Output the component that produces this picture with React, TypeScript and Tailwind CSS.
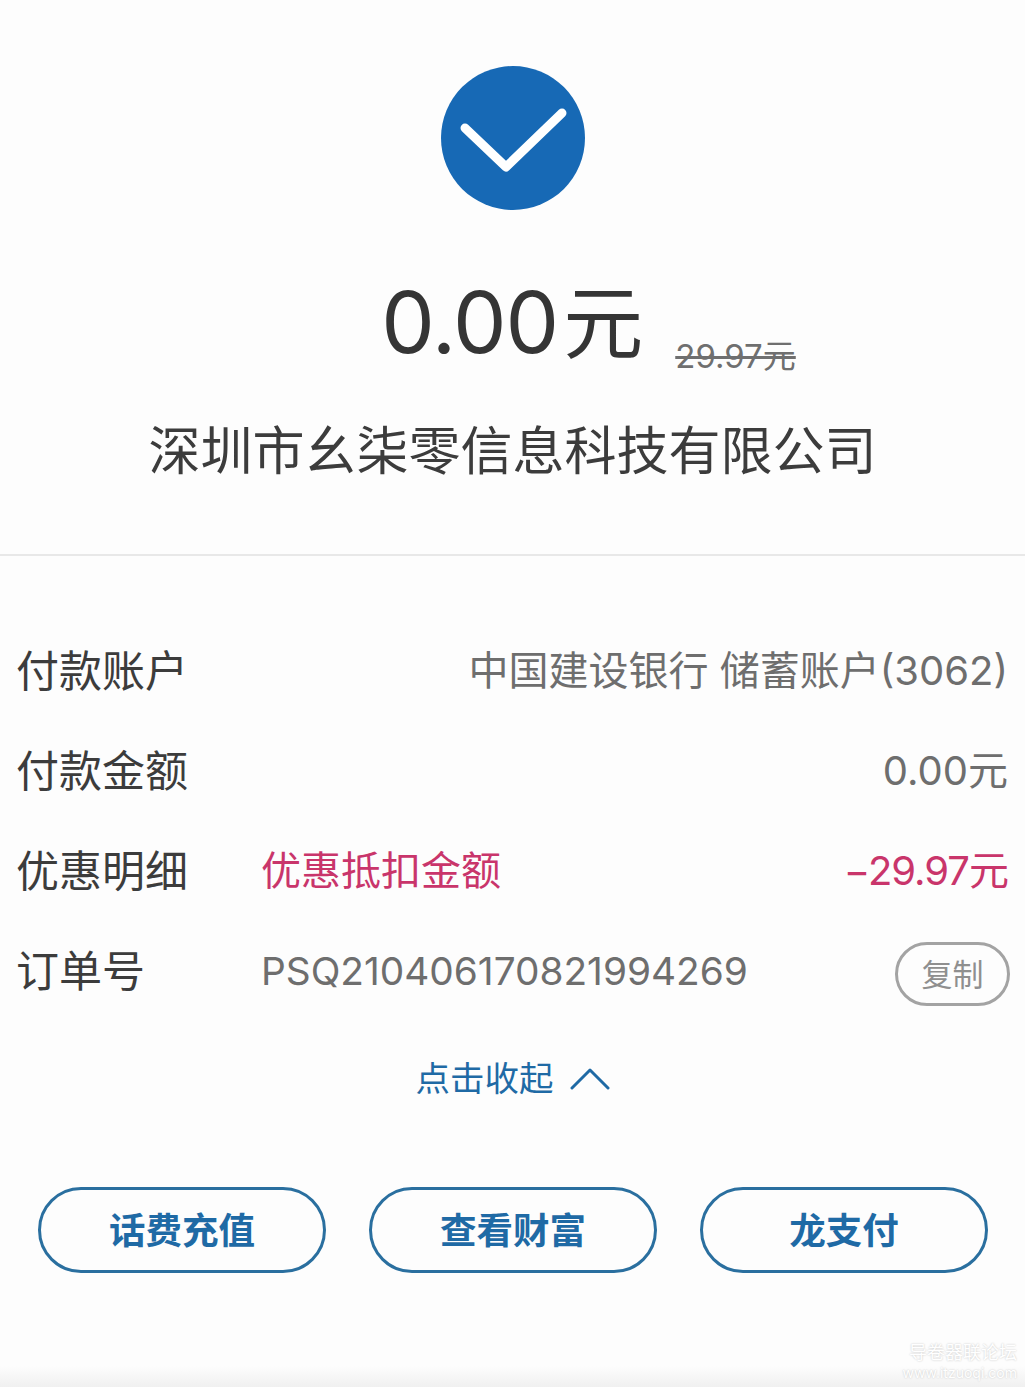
import React from 'react';

const font = { fontFamily: 'Inter, "Noto Sans CJK SC", sans-serif' };

const Row: React.FC<{ label: string; children: React.ReactNode }> = ({ label, children }) => (
  <div className="flex h-[100px] items-center pl-[16px] pr-[17px]">
    <span className="w-[245px] shrink-0 text-[43px] leading-[60px] text-[#3c3c3c]">{label}</span>
    {children}
  </div>
);

const ActionButton: React.FC<{ label: string }> = ({ label }) => (
  <button className="flex h-[86px] w-[288px] items-center justify-center rounded-full border-[3px] border-[#2a6f9f] pt-[3px] text-[36.5px] font-semibold text-[#1f6aa5]">
    {label}
  </button>
);

export default function App() {
  return (
    <div className="flex h-[1387px] w-[1025px] flex-col overflow-hidden bg-[#fdfdfd]" style={font}>
      <div className="flex h-[556px] flex-col items-center border-b-2 border-[#e8e8e8] pt-[66px]">
        <div className="flex h-[144px] w-[144px] items-center justify-center rounded-full bg-[#1769b5]">
          <svg width="144" height="144" viewBox="0 0 144 144" fill="none">
            <path d="M24 62L65 101L121 47" stroke="#ffffff" strokeWidth="9" strokeLinecap="round" strokeLinejoin="round" />
          </svg>
        </div>
        <div className="mt-[53px] ml-[152px] flex h-[120px] items-end">
          <span className="text-[85px] leading-[120px] tracking-[-1px] text-[#353535]">0.00</span>
          <span className="ml-[5px] text-[80px] leading-[120px] text-[#353535]">元</span>
          <span className="mb-[4px] ml-[32px] text-[33px] leading-[46px] text-[#6f6f6f] line-through">29.97元</span>
        </div>
        <div className="mt-[33px] text-[52px] leading-[72px] text-[#3c3c3c]">深圳市幺柒零信息科技有限公司</div>
      </div>

      <div className="mt-[65px] flex flex-col">
        <Row label="付款账户">
          <span className="flex-1 text-right text-[40px] leading-[60px] text-[#6e6e6e]">中国建设银行 储蓄账户(3062)</span>
        </Row>
        <Row label="付款金额">
          <span className="flex-1 text-right text-[40px] leading-[60px] text-[#6e6e6e]">0.00元</span>
        </Row>
        <Row label="优惠明细">
          <span className="text-[40px] leading-[60px] text-[#c9356b]">优惠抵扣金额</span>
          <span className="flex-1 text-right text-[40px] leading-[60px] tracking-[-1px] text-[#c9356b]">−29.97元</span>
        </Row>
        <Row label="订单号">
          <span className="text-[38.8px] leading-[60px] text-[#6e6e6e]">PSQ210406170821994269</span>
          <span className="mt-[6px] mr-[-2px] ml-auto flex h-[64px] w-[115px] items-center justify-center rounded-full border-[3px] border-[#a3a3a3] pt-[2px] text-[31px] text-[#8f8f8f]">复制</span>
        </Row>
      </div>

      <div className="mt-[32px] flex h-[50px] items-center justify-center gap-[16px]">
        <span className="pt-[2px] text-[34.5px] text-[#1f6aa5]">点击收起</span>
        <svg width="40" height="24" viewBox="0 0 40 24" fill="none">
          <path d="M2 22L20 4L38 22" stroke="#1f6aa5" strokeWidth="3" strokeLinecap="round" strokeLinejoin="round" />
        </svg>
      </div>

      <div className="mt-[84px] flex gap-[43px] pl-[38px]">
        <ActionButton label="话费充值" />
        <ActionButton label="查看财富" />
        <ActionButton label="龙支付" />
      </div>

      <div className="mt-auto flex flex-col items-end bg-gradient-to-b from-[#fdfdfd] from-[55%] to-[#f0f0f0] pr-[8px] pb-[6px] text-white [text-shadow:0_0_2px_#c0c0c0]">
        <span className="text-[18px] leading-[24px]">导卷器联论坛</span>
        <span className="text-[14px] leading-[16px]">www.itzuoqi.com</span>
      </div>
    </div>
  );
}
